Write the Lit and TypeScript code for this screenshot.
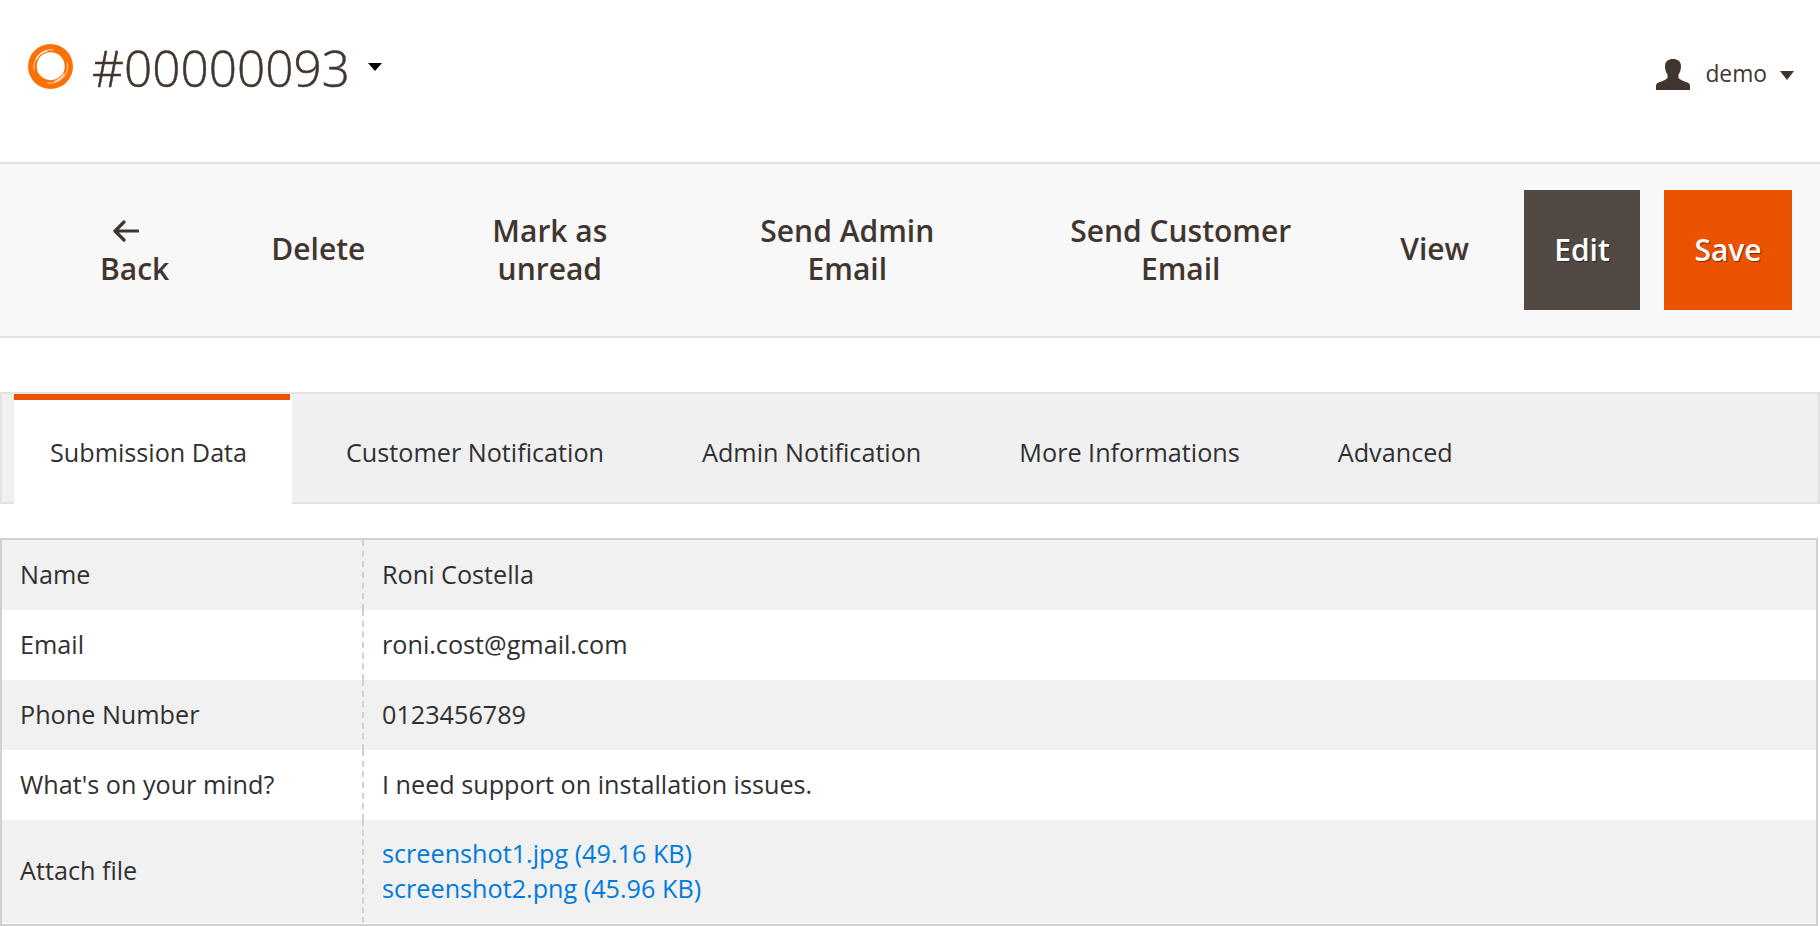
import { LitElement, html, css } from "lit";
import { customElement } from "lit/decorators.js";

@customElement("app-root")
export class AppRoot extends LitElement {
  static styles = css`
    :host { display: block; width: 1820px; height: 926px; overflow: hidden; background: #fff; font-family: "Open Sans", sans-serif; color: #41362f; }
    * { box-sizing: border-box; }
    .header { height: 162px; display: flex; align-items: center; padding: 0 26px 30px 28px; }
    .logo { width: 45px; height: 45px; margin-top: 1px; flex: none; }
    .title { font-size: 49.5px; font-weight: 300; line-height: 60px; margin-left: 19px; -webkit-text-stroke: 0.5px #41362f; margin-top: 3px; }
    .title-caret { width: 0; height: 0; border: 7px solid transparent; border-top: 8px solid #000; border-bottom: 0; margin-left: 18px; margin-top: 1px; }
    .spacer { flex: 1; }
    .user { display: flex; align-items: center; margin-top: 15px; }
    .user-icon { width: 34px; height: 31px; flex: none; margin-top: 1px; }
    .user-name { font-size: 22.8px; margin-left: 15px; }
    .user-caret { width: 0; height: 0; border: 7px solid transparent; border-top: 9px solid #41362f; border-bottom: 0; margin-left: 13px; margin-top: 3px; }
    .toolbar { height: 176px; background: #f8f8f8; border-top: 2px solid #e3e3e3; border-bottom: 2px solid #e3e3e3; display: flex; align-items: center; padding: 0 28px 0 100px; }
    .act { font-size: 30px; font-weight: 600; line-height: 38px; text-align: center; white-space: nowrap; display: flex; flex-direction: column; align-items: center; }
    .back { margin-top: 8px; }
    .arrow { width: 26px; height: 22px; display: block; margin: 0 0 8px 0; transform: translateX(-9px); }
    .single { padding-bottom: 2px; }
    .delete { margin-left: 102px; }
    .mark { margin-left: 127px; }
    .admin { margin-left: 153px; }
    .cust { margin-left: 136px; }
    .view { margin-left: 109px; }
    .btn { height: 120px; display: flex; align-items: center; justify-content: center; color: #fff; font-size: 30px; font-weight: 600; padding-bottom: 2px; text-shadow: 1px 1px 1px rgba(0,0,0,0.5); }
    .edit { width: 116px; background: #514943; margin-left: auto; }
    .save { width: 128px; background: #eb5202; margin-left: 24px; }
    .tabs { margin-top: 54px; height: 112px; background: #f0f0f0; border: 2px solid #e3e3e3; display: flex; padding-left: 12px; font-size: 25.2px; color: #303030; }
    .tab { display: flex; align-items: center; height: 110px; padding-top: 6px; }
    .tab.active { width: 278px; background: #fff; padding: 6px 0 0 36px; margin-right: -2px; position: relative; }
    .tab.active::before { content: ""; position: absolute; left: 0; top: 0; width: 276px; height: 6px; background: #eb5202; }
    .t2 { margin-left: 56px; }
    .t3 { margin-left: 98px; }
    .t4 { margin-left: 98px; }
    .t5 { margin-left: 98px; }
    .table { margin-top: 34px; width: 1818px; height: 388px; border: 2px solid #d1d1d1; font-size: 25.2px; color: #303030; }
    .row { display: flex; height: 70px; align-items: stretch; }
    .row.alt { background: #f1f1f1; }
    .row.last { height: 103px; }
    .label { width: 362px; padding: 0 0 2px 18px; display: flex; align-items: center; border-right: 2px dashed #d1d1d1; flex: none; }
    .value { padding: 0 0 2px 18px; display: flex; flex-direction: column; justify-content: center; line-height: 35px; }
    .last .label { padding-bottom: 3px; }
    .last .value { padding-bottom: 2px; }
    a { color: #007bdb; text-decoration: none; display: block; }
  `;

  render() {
    const rows: [string, unknown][] = [
      ["Name", "Roni Costella"],
      ["Email", "roni.cost@gmail.com"],
      ["Phone Number", "0123456789"],
      ["What's on your mind?", "I need support on installation issues."],
    ];
    return html`
      <div class="header">
        <svg class="logo" viewBox="0 0 45 45">
          <circle cx="22.5" cy="22.5" r="22.5" fill="#fb7106"></circle>
          <circle cx="22.7" cy="22.2" r="14" fill="#fff"></circle>
          <path d="M6.2 26 A16.8 16.8 0 0 1 25 5.8" fill="none" stroke="#fff" stroke-width="0.8" stroke-linecap="round" opacity=".9"></path>
          <path d="M8.5 15 A15.6 15.6 0 0 1 19 7" fill="none" stroke="#fff" stroke-width="1.2" stroke-linecap="round"></path>
          <path d="M39.4 19 A16.8 16.8 0 0 1 20 38.9" fill="none" stroke="#fff" stroke-width="0.8" stroke-linecap="round" opacity=".9"></path>
          <path d="M36 30 A15.6 15.6 0 0 1 27 37.2" fill="none" stroke="#fff" stroke-width="1.1" stroke-linecap="round"></path>
        </svg>
        <div class="title">#00000093</div>
        <div class="title-caret"></div>
        <div class="spacer"></div>
        <div class="user">
          <svg class="user-icon" viewBox="0 0 34 31">
            <path fill="#41362f" d="M9 7 C9 2.5 12.5 0 17 0 C21.5 0 25 2.5 25 7 C25 11 24 13.5 22.5 15.5 L22.5 19 C24.5 21.5 29 22.5 31.5 23.5 C33.5 24.3 34 25.5 34 27 L34 31 L0 31 L0 27 C0 25.5 .5 24.3 2.5 23.5 C5 22.5 9.5 21.5 11.5 19 L11.5 15.5 C10 13.5 9 11 9 7 Z"></path>
          </svg>
          <div class="user-name">demo</div>
          <div class="user-caret"></div>
        </div>
      </div>
      <div class="toolbar">
        <div class="act back">
          <svg class="arrow" viewBox="0 0 26 22"><path d="M11 2 L2 11 L11 20 M2.5 11 H25" fill="none" stroke="#41362f" stroke-width="3.2" stroke-linecap="round" stroke-linejoin="round"></path></svg>
          Back
        </div>
        <div class="act single delete">Delete</div>
        <div class="act mark">Mark as<br />unread</div>
        <div class="act admin">Send Admin<br />Email</div>
        <div class="act cust">Send Customer<br />Email</div>
        <div class="act single view">View</div>
        <div class="btn edit">Edit</div>
        <div class="btn save">Save</div>
      </div>
      <div class="tabs">
        <div class="tab active">Submission Data</div>
        <div class="tab t2">Customer Notification</div>
        <div class="tab t3">Admin Notification</div>
        <div class="tab t4">More Informations</div>
        <div class="tab t5">Advanced</div>
      </div>
      <div class="table">
        ${rows.map(
          ([l, v], i) => html`<div class="row ${i % 2 === 0 ? "alt" : ""}">
            <div class="label">${l}</div>
            <div class="value">${v}</div>
          </div>`
        )}
        <div class="row alt last">
          <div class="label">Attach file</div>
          <div class="value">
            <a>screenshot1.jpg (49.16 KB)</a>
            <a>screenshot2.png (45.96 KB)</a>
          </div>
        </div>
      </div>
    `;
  }
}
